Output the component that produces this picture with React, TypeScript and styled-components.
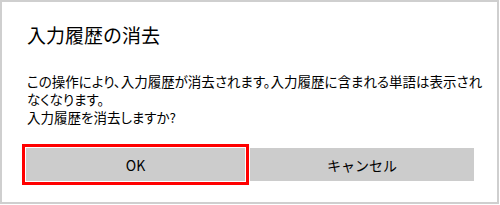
import React from "react";
import styled, { createGlobalStyle } from "styled-components";

const Global = createGlobalStyle`
  html, body { margin: 0; padding: 0; background: #ffffff; }
  body { font-family: "Noto Sans CJK JP", "Noto Sans", sans-serif; }
`;

const Window = styled.div`
  box-sizing: border-box;
  width: 499px;
  height: 204px;
  border: 2px solid #cfcfcf;
  background: #ffffff;
  display: flex;
  flex-direction: column;
  padding-left: 25px;
`;

const Title = styled.h1`
  margin: 19px 0 0 0;
  font-size: 19px;
  line-height: 28px;
  font-weight: 400;
  color: #000000;
`;

const Message = styled.p`
  margin: 23px 0 0 0;
  font-size: 13.5px;
  line-height: 18px;
  color: #000000;
  white-space: nowrap;
  font-feature-settings: "palt";
`;

const ButtonRow = styled.div`
  display: flex;
  align-items: center;
  margin-top: 18px;
  margin-left: -5px;
  gap: 1px;
`;

const FocusFrame = styled.div`
  box-sizing: border-box;
  border: 3px solid #ff0000;
  padding: 1px;
  background: #ffffff;
  display: flex;
`;

const Button = styled.button<{ $width: number }>`
  box-sizing: border-box;
  width: ${(p) => p.$width}px;
  height: 33px;
  border: none;
  margin: 0;
  padding: 0;
  background: #cccccc;
  color: #000000;
  font-family: "Noto Sans CJK JP", "Noto Sans", sans-serif;
  font-size: 14px;
  display: flex;
  align-items: center;
  justify-content: center;
`;

export default function App() {
  return (
    <>
      <Global />
      <Window>
        <Title>入力履歴の消去</Title>
        <Message>
          この操作により、入力履歴が消去されます。入力履歴に含まれる単語は表示され
          <br />
          なくなります。
          <br />
          入力履歴を消去しますか?
        </Message>
        <ButtonRow>
          <FocusFrame>
            <Button $width={219}>OK</Button>
          </FocusFrame>
          <Button $width={224}>キャンセル</Button>
        </ButtonRow>
      </Window>
    </>
  );
}
